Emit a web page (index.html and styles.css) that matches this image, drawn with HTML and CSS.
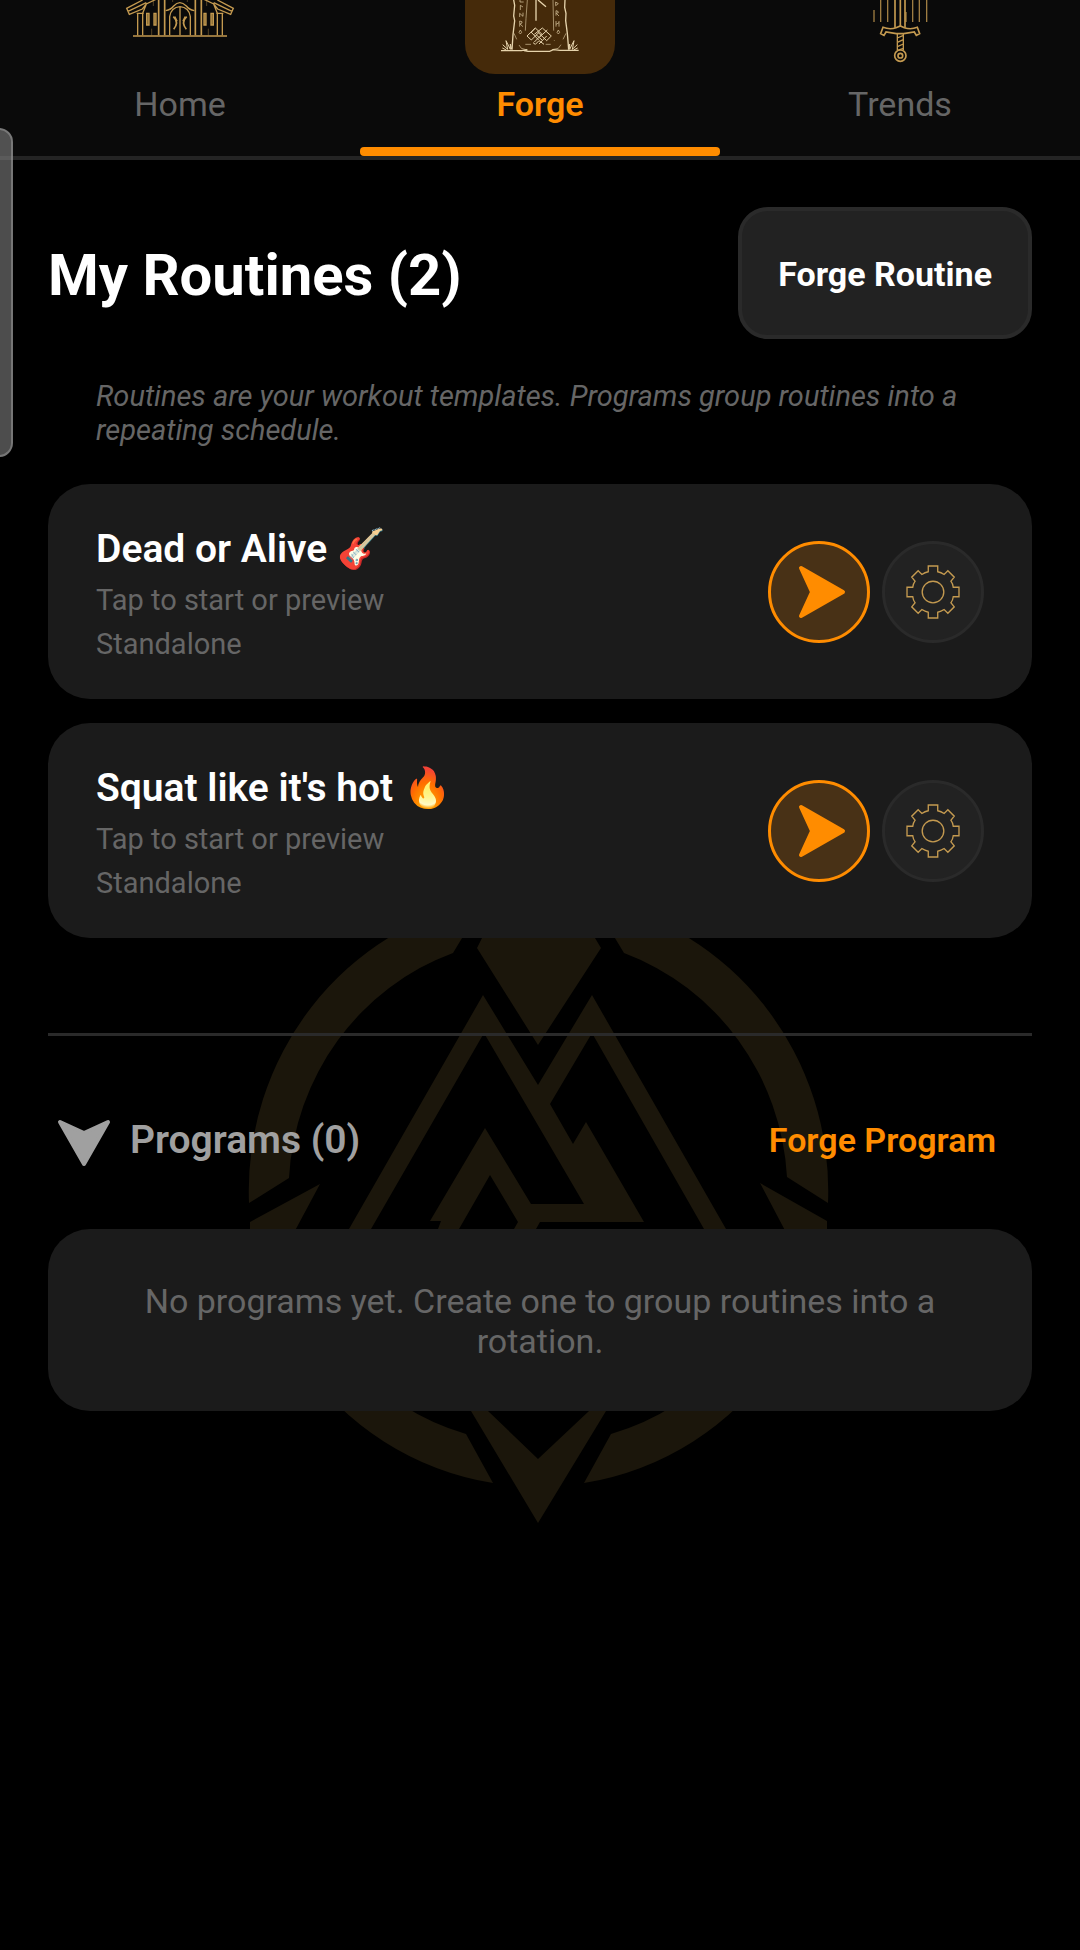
FILE: index.html
```html
<!DOCTYPE html>
<html lang="en">
<head>
    <meta charset="UTF-8">
    <meta name="viewport" content="width=device-width, initial-scale=1.0">
    <title>My Routines</title>
    <link rel="stylesheet" href="styles.css">
</head>
<body>
    <!-- Shared icons -->
    <svg class="icon-defs" aria-hidden="true">
        <symbol id="arrow" viewBox="-30 -30 60 60">
            <path d="M-18 -24 L24 0 L-18 24 L-7 0 Z" fill="currentColor" stroke="currentColor" stroke-width="4" stroke-linejoin="round"/>
        </symbol>
        <symbol id="gear" viewBox="-80 -80 160 160">
            <path d="M-14 -77H14V-60Q24 -58 33 -52L44 -63L63 -44L53 -32Q59 -24 60 -14H77V14H60Q59 24 53 32L63 44L44 63L33 52Q24 58 14 60V77H-14V60Q-24 58 -33 52L-44 63L-63 44L-53 32Q-59 24 -60 14H-77V-14H-60Q-59 -24 -53 -32L-63 -44L-44 -63L-33 -52Q-24 -58 -14 -60Z"/>
            <circle r="32"/>
        </symbol>
    </svg>

    <!-- Tabs -->
    <nav class="tabs">
        <a class="tab" href="#home">
            <svg class="tab-icon" viewBox="15 0 450 222" aria-hidden="true">
                <g fill="none" stroke="#c49a50" stroke-width="4">
                    <path d="M99 108H381" stroke-width="5"/>
                    <path d="M113 40V106M128 40V106M352 40V106M367 40V106M110 40H131M349 40H370"/>
                    <path d="M176 0V106M194 0V106M286 0V106M304 0V106" stroke-width="5"/>
                    <path d="M128 0L80 25L88 43L127 27L139 12L176 -6M84 34L139 8M139 12L128 40M352 0L400 25L392 43L353 27L341 12L304 -6M396 34L341 8M341 12L352 40"/>
                    <path d="M197 32Q213 29 221 18Q239 -2 259 18Q267 29 283 32M209 106V50Q213 22 240 20Q267 22 271 50V106M240 20V106"/>
                    <path d="M220 50Q238 67 221 88M224 50L231 64M260 50Q242 67 259 88M256 50L249 64" stroke-width="5"/>
                    <path d="M140 40H147V75H140ZM162 40H168V75H162ZM312 40H318V75H312ZM333 40H340V75H333Z" fill="#77602f"/>
                    <path d="M155 86V106M325 86V106M160 0V18M320 0V18M218 0V6M262 0V6" stroke-width="2" opacity=".6"/>
                </g>
            </svg>
            <span>Home</span>
        </a>
        <a class="tab active" href="#forge" aria-current="page">
            <svg class="tab-icon" viewBox="45 0 450 222" aria-hidden="true">
                <g fill="none" stroke="#e6d3ac" stroke-width="3">
                    <path d="M191 0L194 16L191 48L194 62L189 104L186 149M345 0L344 22L348 40L347 62L352 100L356 149" stroke-width="4"/>
                    <path d="M153 152H214L232 149M222 152L234 154H299L310 149L330 151H386" stroke-width="4"/>
                    <path d="M158 134L173 148L168 122L181 148L181 132L185 148M382 134L367 148L372 122L359 148L359 132L355 148M157 144L169 150M383 144L371 150"/>
                    <path d="M258 0V62M264 0L288 20" stroke-width="4"/>
                    <path d="M232 0L228 55L226 92M309 0L311 92" opacity=".6"/>
                    <path d="M210 -4V6H221M211 30V16L219 21M209 51V40L219 49V38M209 80V63Q219 64 216 69L210 72L219 80M211 90L207 97L211 102L215 97ZM317 6V17L325 11ZM318 47V32Q327 34 325 38L319 40L327 48M318 63V80M327 63V80M318 73L327 68M325 90L321 97L325 102L329 97Z" stroke-width="2"/>
                    <path d="M231 108L256 84L276 103L253 126M253 103L277 84L304 108L290 122M231 108L244 120L267 97M243 96L266 120M276 120L258 104M263 96L290 122M256 84L244 97M267 132L290 108M270 110L292 90M249 128L256 133L267 122L282 133"/>
                    <path d="M226 133H243M287 133H302M313 120V122M207 135L214 145L232 150M192 100L200 118M348 100L339 118M333 134L325 145L306 149" opacity=".6"/>
                </g>
            </svg>
            <span>Forge</span>
        </a>
        <a class="tab" href="#trends">
            <svg class="tab-icon" viewBox="-45 0 450 222" aria-hidden="true">
                <g fill="none" stroke="#c49a50" stroke-width="4">
                    <path d="M102 30V66M122 0V66M143 0V66M218 0V66M238 0V66M260 0V66M198 36V66" opacity=".8"/>
                    <path d="M165 0V83M181 0V80M195 0V83" stroke-width="5"/>
                    <path d="M168 83Q150 90 129 82L122 101L132 106L138 96L169 101H191L223 96L229 106L239 101L232 82Q212 90 193 83L181 78Z" stroke-width="5"/>
                    <path d="M172 101V151M190 101V151M172 114L190 106M172 127L190 119M172 140L190 132M173 151L190 145"/>
                    <circle cx="181" cy="167" r="17" stroke-width="5"/>
                    <circle cx="181" cy="167" r="7" stroke-width="5"/>
                </g>
            </svg>
            <span>Trends</span>
        </a>
    </nav>

    <div class="edge-handle"></div>

    <!-- Background emblem -->
    <svg class="emblem" viewBox="240 900 600 630" aria-hidden="true">
        <path d="M485 900A290 296 0 0 0 249 1203L289 1178A249 254 0 0 1 453 953L485 900ZM592 900A290 296 0 0 1 828 1203L787 1177A249 254 0 0 0 624 953Z"/>
        <path d="M482 938L477 948L538 1045L601 948L595 938ZM320 1184L250 1222V1240H290ZM760 1183L827 1221V1240H790Z"/>
        <path d="M349 1229L483 995L538 1085L592 995L726 1229H704L592 1033L550 1104L573 1144L586 1122L644 1222H540L536 1229H514L518 1222L490 1175L459 1229H438L441 1221H430L485 1128L531 1204H584L484 1033L371 1229Z"/>
        <path d="M300 1360A290 296 0 0 0 493 1483L466 1434A249 254 0 0 1 350 1360ZM777 1360A290 296 0 0 1 584 1483L611 1434A249 254 0 0 0 727 1360Z"/>
        <path d="M471 1411L538 1523L606 1411H589L538 1459L488 1411Z"/>
    </svg>

    <!-- Main Content -->
    <main>
        <div class="section-head">
            <h1>My Routines (2)</h1>
            <button class="forge-btn" type="button">Forge Routine</button>
        </div>
        <p class="hint">Routines are your workout templates. Programs group routines into a repeating schedule.</p>

        <div class="routine-list">
            <article class="card routine">
                <div class="routine-info">
                    <h2>Dead or Alive 🎸</h2>
                    <p>Tap to start or preview</p>
                    <p>Standalone</p>
                </div>
                <div class="actions">
                    <button class="round-btn play" type="button" aria-label="Start Dead or Alive"><svg class="arrow-icon"><use href="#arrow"/></svg></button>
                    <button class="round-btn" type="button" aria-label="Dead or Alive settings"><svg class="gear-icon"><use href="#gear"/></svg></button>
                </div>
            </article>
            <article class="card routine">
                <div class="routine-info">
                    <h2>Squat like it's hot 🔥</h2>
                    <p>Tap to start or preview</p>
                    <p>Standalone</p>
                </div>
                <div class="actions">
                    <button class="round-btn play" type="button" aria-label="Start Squat like it's hot"><svg class="arrow-icon"><use href="#arrow"/></svg></button>
                    <button class="round-btn" type="button" aria-label="Squat like it's hot settings"><svg class="gear-icon"><use href="#gear"/></svg></button>
                </div>
            </article>
        </div>

        <hr>

        <div class="programs-head">
            <button class="programs-toggle" type="button" aria-expanded="true">
                <svg class="arrow-icon down" aria-hidden="true"><use href="#arrow"/></svg>
                <span>Programs (0)</span>
            </button>
            <button class="link-btn" type="button">Forge Program</button>
        </div>
        <div class="card empty">
            <p>No programs yet. Create one to group routines into a rotation.</p>
        </div>
    </main>
</body>
</html>
```
FILE: styles.css
```css
/* Basic Reset */
* {
    margin: 0;
    padding: 0;
    box-sizing: border-box;
}

body {
    position: relative;
    min-height: 100vh;
    font-family: Roboto, "Noto Sans", sans-serif;
    background-color: #000;
    color: #fff;
}

button {
    font-family: inherit;
    background: none;
    border: none;
    cursor: pointer;
}

svg {
    display: block;
}

.icon-defs {
    position: absolute;
    width: 0;
    height: 0;
}

/* Tabs */
.tabs {
    display: grid;
    grid-template-columns: repeat(3, 1fr);
    background-color: #0a0a0a;
    border-bottom: 4px solid #242424;
}

.tab {
    position: relative;
    display: flex;
    flex-direction: column;
    align-items: center;
    gap: 10px;
    padding-bottom: 32px;
    font-size: 34px;
    line-height: 40px;
    color: #666;
    text-decoration: none;
}

.tab-icon {
    width: 150px;
    height: 74px;
}

.tab.active {
    color: #ff8c00;
    font-weight: 600;
}

.tab.active .tab-icon {
    background-color: #452a0a;
    border-radius: 0 0 30px 30px;
}

/* Underline of the open tab */
.tab.active::after {
    content: "";
    position: absolute;
    left: 0;
    right: 0;
    bottom: 0;
    height: 9px;
    border-radius: 4px;
    background-color: #ff8c00;
}

/* Handle on the left screen edge */
.edge-handle {
    position: absolute;
    z-index: 2;
    top: 128px;
    left: -20px;
    width: 33px;
    height: 329px;
    background-color: rgba(128, 128, 128, 0.6);
    border: 2px solid rgba(160, 160, 160, 0.5);
    border-radius: 14px;
}

/* Emblem behind the content */
.emblem {
    position: absolute;
    top: 900px;
    left: 50%;
    width: 600px;
    height: 630px;
    transform: translateX(-50%);
    fill: #1b160b;
}

main {
    position: relative;
    padding: 47px 48px;
}

.section-head {
    display: flex;
    justify-content: space-between;
    align-items: center;
}

h1 {
    padding-top: 4px;
    font-size: 58px;
    font-weight: 700;
}

.forge-btn {
    padding: 43px 36px 41px;
    font-size: 34px;
    line-height: 40px;
    font-weight: 700;
    color: #fff;
    background-color: #222;
    border: 4px solid #2a2a2a;
    border-radius: 30px;
}

.hint {
    margin: 40px 48px 37px;
    font-size: 29px;
    line-height: 34px;
    font-style: italic;
    color: #666;
}

/* Cards */
.card {
    background-color: #1b1b1b;
    border-radius: 42px;
}

.routine-list {
    display: flex;
    flex-direction: column;
    gap: 24px;
}

.routine {
    display: flex;
    justify-content: space-between;
    align-items: center;
    padding: 34px 48px;
}

.routine-info {
    padding-top: 3px;
}

.routine h2 {
    font-size: 39px;
    line-height: 57px;
    font-weight: 600;
}

.routine p {
    font-size: 29px;
    line-height: 45px;
    color: #666;
}

.routine p:last-child {
    line-height: 42px;
}

.actions {
    display: flex;
    gap: 12px;
}

.round-btn {
    display: flex;
    justify-content: center;
    align-items: center;
    width: 102px;
    height: 102px;
    background-color: #222;
    border: 3px solid #2a2a2a;
    border-radius: 50%;
}

.round-btn.play {
    background-color: #483116;
    border-color: #ff8c00;
    color: #ff8c00;
}

.arrow-icon {
    width: 60px;
    height: 60px;
}

.arrow-icon.down {
    transform: rotate(90deg);
}

.gear-icon {
    width: 54px;
    height: 54px;
    fill: none;
    stroke: #c49a50;
    stroke-width: 4px;
}

hr {
    height: 3px;
    margin: 95px 0 51px;
    border: none;
    background-color: #2a2a2a;
}

/* Programs */
.programs-head {
    display: flex;
    justify-content: space-between;
    align-items: center;
    margin-bottom: 37px;
    padding: 0 36px 0 6px;
}

.programs-toggle {
    display: flex;
    align-items: center;
    gap: 16px;
    height: 105px;
    font-size: 39px;
    font-weight: 600;
    color: #a0a0a0;
}

.link-btn {
    font-size: 34px;
    line-height: 40px;
    font-weight: 600;
    color: #ff8c00;
}

.empty {
    padding: 52px 48px 50px;
    font-size: 34px;
    line-height: 40px;
    text-align: center;
    color: #666;
}
```
